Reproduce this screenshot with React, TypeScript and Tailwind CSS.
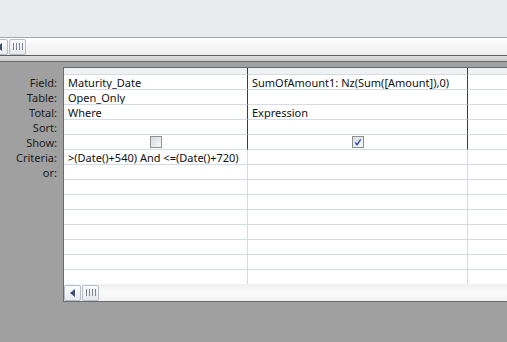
import React from "react";

const LABELS = ["Field:", "Table:", "Total:", "Sort:", "Show:", "Criteria:", "or:"];
const EXTRA_ROWS = 7;

type Cell = { text?: string; check?: "on" | "off" };

const COL1: Cell[] = [
  { text: "Maturity_Date" },
  { text: "Open_Only" },
  { text: "Where" },
  {},
  { check: "off" },
  { text: ">(Date()+540) And <=(Date()+720)" },
  {},
];

const COL2: Cell[] = [
  { text: "SumOfAmount1: Nz(Sum([Amount]),0)" },
  {},
  { text: "Expression" },
  {},
  { check: "on" },
  {},
  {},
];

const COL3: Cell[] = [{}, {}, {}, {}, {}, {}, {}];

function CheckBox({ on }: { on: boolean }) {
  return (
    <div className="w-[12px] h-[12px] border border-[#8e8f8f] bg-gradient-to-br from-[#dcdcdc] to-[#fafafa] p-[1px]">
      <div className="w-full h-full bg-gradient-to-br from-[#d7dce4] to-[#f4f6f9] flex items-center justify-center">
        {on && (
          <svg width="9" height="9" viewBox="0 0 9 9">
            <path d="M1.5 4.5 L3.5 7 L7.5 1" fill="none" stroke="#3055a5" strokeWidth="1.6" />
          </svg>
        )}
      </div>
    </div>
  );
}

function ScrollButtons({ cut }: { cut?: boolean }) {
  return (
    <div className={`flex gap-[1px] h-full items-center ${cut ? "-ml-[9px]" : ""}`}>
      <div className="w-[17px] h-[16px] rounded-[2px] border border-[#b8bec8] bg-gradient-to-b from-[#fbfbfc] to-[#e6e9ee] flex items-center justify-center">
        <svg width="5" height="8" viewBox="0 0 5 8">
          <path d="M5 0 L0 4 L5 8 Z" fill="#3d4c70" />
        </svg>
      </div>
      <div className="w-[17px] h-[16px] rounded-[2px] border border-[#b8bec8] bg-gradient-to-b from-[#fbfbfc] to-[#e6e9ee] flex items-center justify-center gap-[2px]">
        <div className="w-[1px] h-[7px] bg-[#7f8590]" />
        <div className="w-[1px] h-[7px] bg-[#7f8590]" />
        <div className="w-[1px] h-[7px] bg-[#7f8590]" />
        <div className="w-[1px] h-[7px] bg-[#7f8590]" />
      </div>
    </div>
  );
}

function Column({ cells, width, last }: { cells: Cell[]; width: string; last?: boolean }) {
  const rows = [...cells, ...Array.from({ length: EXTRA_ROWS }, () => ({} as Cell))];
  return (
    <div className={`flex flex-col shrink-0 ${width}`}>
      <div
        className={`h-[7px] bg-[#f0f1f3] border-b border-[#d5dce5] ${last ? "" : "border-r border-r-[#3c3c3c]"}`}
      />
      {rows.map((c, i) => {
        const dark = i < 5;
        const isLast = i === rows.length - 1;
        const right = last ? "" : dark ? "border-r border-r-[#3c3c3c]" : "border-r border-r-[#d5dce5]";
        const bottom = isLast ? "h-[14px]" : "h-[15px] border-b border-b-[#d5dce5]";
        return (
          <div
            key={i}
            className={`${bottom} ${right} bg-white flex items-center ${c.check ? "justify-center" : "pl-[4px]"} whitespace-nowrap overflow-hidden`}
          >
            {c.text && <span className="leading-none">{c.text}</span>}
            {c.check && <CheckBox on={c.check === "on"} />}
          </div>
        );
      })}
    </div>
  );
}

export default function App() {
  return (
    <div
      className="w-[507px] h-[342px] overflow-hidden bg-[#a0a0a0] flex flex-col text-[11px] text-[#111]"
      style={{ fontFamily: '"Noto Sans", "Open Sans", sans-serif' }}
    >
      <div className="h-[37px] bg-[#e9ebee] shrink-0" />
      <div className="h-[19px] shrink-0 border-t border-t-[#a6a6a6] border-b border-b-[#5e5e5e] bg-gradient-to-b from-[#ffffff] to-[#eeeeee] flex items-center">
        <ScrollButtons cut />
      </div>
      <div className="h-[6px] shrink-0 bg-gradient-to-b from-[#dedede] to-[#cccccc] border-b border-b-[#6b6b6b]" />

      <div className="flex pt-[5px]">
        <div className="w-[63px] shrink-0 flex flex-col pt-[8px] pr-[6px] text-right">
          {LABELS.map((l) => (
            <div key={l} className="h-[15px] flex items-center justify-end leading-none text-[#1b1b1b]">
              {l}
            </div>
          ))}
        </div>

        <div className="flex flex-col border-l border-t border-b border-[#6b6b6b]">
          <div className="flex">
            <Column cells={COL1} width="w-[184px]" />
            <Column cells={COL2} width="w-[220px]" />
            <Column cells={COL3} width="w-[60px]" last />
          </div>
          <div className="h-[17px] bg-gradient-to-b from-[#f0f0f0] via-[#fafafa] to-[#f2f2f2] flex items-center">
            <ScrollButtons />
          </div>
        </div>
      </div>
    </div>
  );
}
